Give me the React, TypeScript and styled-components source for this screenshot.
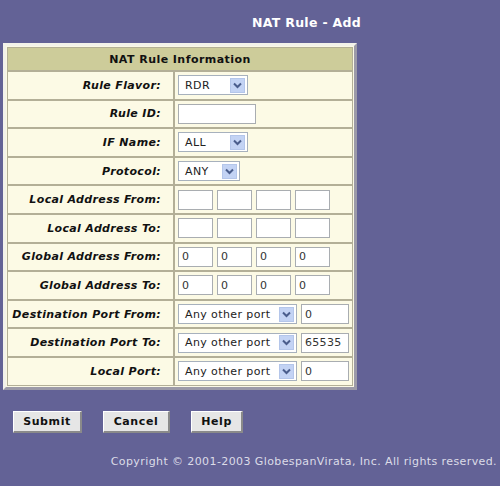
import React from "react";
import styled, { createGlobalStyle } from "styled-components";

const GlobalStyle = createGlobalStyle`
  html, body {
    margin: 0;
    padding: 0;
    background: #636296;
  }
  body {
    font-family: "DejaVu Sans", Verdana, sans-serif;
    font-size: 11px;
  }
`;

const Page = styled.div`
  width: 500px;
  height: 486px;
  background: #636296;
  display: flex;
  flex-direction: column;
  overflow: hidden;
`;

const Title = styled.h1`
  margin: 0;
  padding: 15px 0 0 252px;
  height: 28px;
  color: #ffffff;
  font-size: 12.5px;
  font-weight: bold;
  letter-spacing: 0.3px;
`;

const Frame = styled.div`
  margin-left: 3px;
  width: 346px;
  border-style: solid;
  border-width: 3px;
  border-color: #f3f2ea #9c9aa8 #9c9aa8 #f3f2ea;
  background: #fbf9e4;
  padding: 1px;
`;

const Grid = styled.div`
  display: grid;
  grid-template-columns: 165px 1fr;
  grid-template-rows: 22px repeat(11, 26.6px);
  gap: 2px;
  background: #b3af97;
  border: 1px solid #b3af97;
`;

const Header = styled.div`
  grid-column: 1 / 3;
  background: #cdcc9a;
  color: #111;
  font-weight: bold;
  font-size: 11px;
  letter-spacing: 0.45px;
  display: flex;
  align-items: center;
  justify-content: center;
`;

const Label = styled.div`
  background: #fcfae5;
  display: flex;
  align-items: center;
  justify-content: flex-end;
  padding-right: 12px;
  font-weight: bold;
  font-style: italic;
  letter-spacing: 0.35px;
  color: #111;
  white-space: nowrap;
`;

const Value = styled.div`
  background: #fcfae5;
  display: flex;
  align-items: center;
  gap: 4px;
  padding-left: 3px;
`;

const SelectBox = styled.div<{ $width: number }>`
  width: ${(p) => p.$width}px;
  height: 20px;
  box-sizing: border-box;
  border: 1px solid #a7b1bd;
  background: #fff;
  display: flex;
  align-items: center;
  justify-content: space-between;
  padding: 0 2px 0 6px;
  color: #222;
  letter-spacing: 0.4px;
  white-space: nowrap;
`;

const Arrow = styled.span`
  width: 15px;
  height: 15px;
  flex: none;
  background: #c3d3f4;
  border: 1px solid #b4c6ea;
  box-sizing: border-box;
  display: flex;
  align-items: center;
  justify-content: center;
`;

const Field = styled.div<{ $width: number }>`
  width: ${(p) => p.$width}px;
  height: 20px;
  box-sizing: border-box;
  border: 1px solid #a9adb1;
  background: #fff;
  display: flex;
  align-items: center;
  padding-left: 3px;
  color: #333;
  letter-spacing: 0.3px;
`;

const Buttons = styled.div`
  display: flex;
  gap: 21px;
  padding: 21px 0 0 13px;
`;

const Button = styled.button<{ $width: number }>`
  width: ${(p) => p.$width}px;
  height: 22px;
  background: #e6e6e6;
  border-style: solid;
  border-width: 1px 2px 2px 1px;
  border-color: #ffffff #8a8a8a #8a8a8a #ffffff;
  font-family: "DejaVu Sans", Verdana, sans-serif;
  font-size: 11px;
  font-weight: bold;
  letter-spacing: 0.6px;
  color: #111;
  padding: 0;
`;

const Copyright = styled.div`
  padding: 22px 3px 0 0;
  text-align: right;
  color: #dcdce8;
  font-size: 11px;
  letter-spacing: 0.4px;
  white-space: nowrap;
`;

const Chevron = () => (
  <svg width="9" height="7" viewBox="0 0 9 7">
    <path d="M1 1.5 L4.5 5 L8 1.5" fill="none" stroke="#4a5d8c" strokeWidth="2" />
  </svg>
);

const Select = ({ value, width }: { value: string; width: number }) => (
  <SelectBox $width={width}>
    <span>{value}</span>
    <Arrow>
      <Chevron />
    </Arrow>
  </SelectBox>
);

const Address = ({ values }: { values: string[] }) => (
  <>
    {values.map((v, i) => (
      <Field key={i} $width={35}>
        {v}
      </Field>
    ))}
  </>
);

const empty = ["", "", "", ""];
const zeros = ["0", "0", "0", "0"];

const rows: { label: string; control: React.ReactNode }[] = [
  { label: "Rule Flavor:", control: <Select value="RDR" width={70} /> },
  { label: "Rule ID:", control: <Field $width={78} /> },
  { label: "IF Name:", control: <Select value="ALL" width={70} /> },
  { label: "Protocol:", control: <Select value="ANY" width={62} /> },
  { label: "Local Address From:", control: <Address values={empty} /> },
  { label: "Local Address To:", control: <Address values={empty} /> },
  { label: "Global Address From:", control: <Address values={zeros} /> },
  { label: "Global Address To:", control: <Address values={zeros} /> },
  {
    label: "Destination Port From:",
    control: (
      <>
        <Select value="Any other port" width={119} />
        <Field $width={48}>0</Field>
      </>
    ),
  },
  {
    label: "Destination Port To:",
    control: (
      <>
        <Select value="Any other port" width={119} />
        <Field $width={48}>65535</Field>
      </>
    ),
  },
  {
    label: "Local Port:",
    control: (
      <>
        <Select value="Any other port" width={119} />
        <Field $width={48}>0</Field>
      </>
    ),
  },
];

export default function App() {
  return (
    <Page>
      <GlobalStyle />
      <Title>NAT Rule - Add</Title>
      <Frame>
        <Grid>
          <Header>NAT Rule Information</Header>
          {rows.map((r) => (
            <React.Fragment key={r.label}>
              <Label>{r.label}</Label>
              <Value>{r.control}</Value>
            </React.Fragment>
          ))}
        </Grid>
      </Frame>
      <Buttons>
        <Button $width={69}>Submit</Button>
        <Button $width={67}>Cancel</Button>
        <Button $width={52}>Help</Button>
      </Buttons>
      <Copyright>Copyright © 2001-2003 GlobespanVirata, Inc. All rights reserved.</Copyright>
    </Page>
  );
}
